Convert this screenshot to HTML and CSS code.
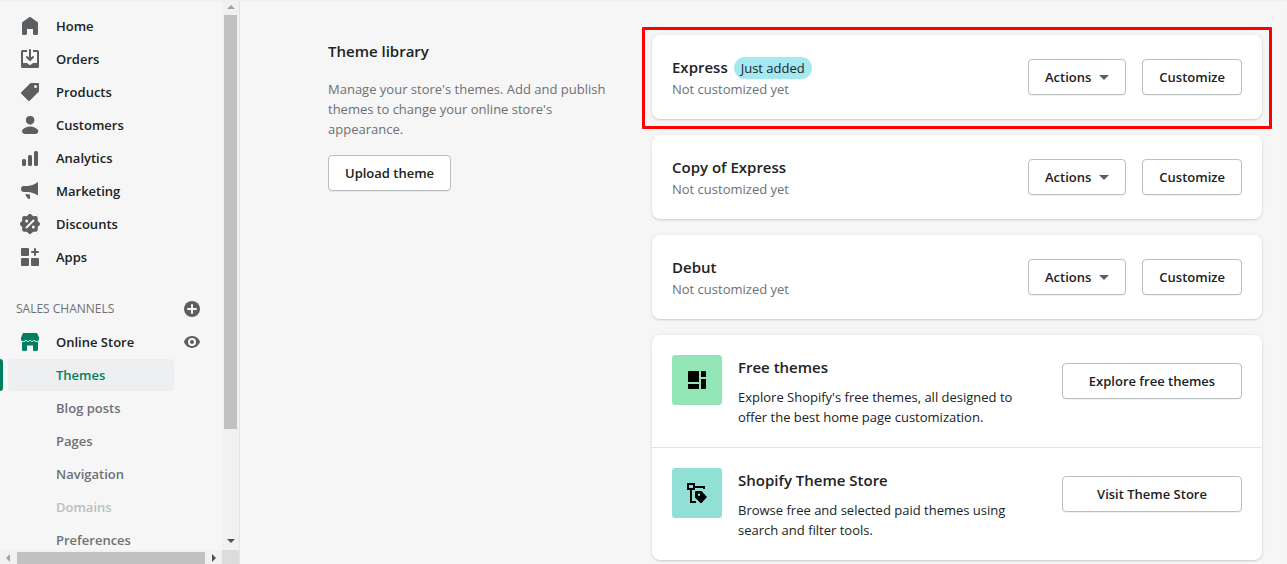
FILE: index.html
```html
<!DOCTYPE html>
<html lang="en">
<head>
    <meta charset="UTF-8">
    <meta name="viewport" content="width=device-width, initial-scale=1.0">
    <title>Themes</title>
    <link rel="stylesheet" href="styles.css">
</head>
<body>
    <div class="app">
        <aside class="sidebar">
            <nav class="nav">
                <ul class="nav-list">
                    <li><a href="#" class="nav-item">
                        <svg class="icon" viewBox="0 0 20 20"><path d="M18 7.261V17.5c0 .841-.672 1.5-1.5 1.5h-2c-.828 0-1.5-.659-1.5-1.5V13H7v4.477C7 18.318 6.328 19 5.5 19h-2c-.828 0-1.5-.682-1.5-1.523V7.261a1.5 1.5 0 0 1 .615-1.21l6.59-4.82a1.481 1.481 0 0 1 1.59 0l6.59 4.82A1.5 1.5 0 0 1 18 7.26z"/></svg>
                        Home</a></li>
                    <li><a href="#" class="nav-item">
                        <svg class="icon" viewBox="0 0 20 20"><path d="M11 1a1 1 0 1 0-2 0v7.586L7.707 7.293a1 1 0 0 0-1.414 1.414l3 3a1 1 0 0 0 1.414 0l3-3a1 1 0 0 0-1.414-1.414L11 8.586V1z"/><path d="M3 14V3h4V1H2.5A1.5 1.5 0 0 0 1 2.5v15A1.5 1.5 0 0 0 2.5 19h15a1.5 1.5 0 0 0 1.5-1.5v-15A1.5 1.5 0 0 0 17.5 1H13v2h4v11h-3.5c-.775 0-1.388.662-1.926 1.244l-.11.12A1.994 1.994 0 0 1 10 16a1.994 1.994 0 0 1-1.463-.637l-.111-.12C7.888 14.664 7.275 14 6.5 14H3z"/></svg>
                        Orders</a></li>
                    <li><a href="#" class="nav-item">
                        <svg class="icon" viewBox="0 0 20 20"><path fill-rule="evenodd" d="M10.293 1.293A1 1 0 0 1 11 1h7a1 1 0 0 1 1 1v7a1 1 0 0 1-.293.707l-9 9a1 1 0 0 1-1.414 0l-7-7a1 1 0 0 1 0-1.414l9-9zM15.5 6a1.5 1.5 0 1 0 0-3 1.5 1.5 0 0 0 0 3z"/></svg>
                        Products</a></li>
                    <li><a href="#" class="nav-item">
                        <svg class="icon" viewBox="0 0 20 20"><path d="M14.363 5.22a4.22 4.22 0 1 1-8.439 0 4.22 4.22 0 0 1 8.439 0zM2.67 14.469c1.385-1.09 4.141-2.853 7.474-2.853 3.332 0 6.089 1.764 7.474 2.853.618.486.81 1.308.567 2.056l-.333 1.02A2.11 2.11 0 0 1 15.846 19H4.441a2.11 2.11 0 0 1-2.005-1.455l-.333-1.02c-.245-.748-.052-1.57.567-2.056z"/></svg>
                        Customers</a></li>
                    <li><a href="#" class="nav-item">
                        <svg class="icon" viewBox="0 0 20 20"><rect x="2" y="11" width="4" height="7" rx="1.5"/><rect x="8" y="7" width="4" height="11" rx="1.5"/><rect x="14" y="3" width="4" height="15" rx="1.5"/></svg>
                        Analytics</a></li>
                    <li><a href="#" class="nav-item">
                        <svg class="icon" viewBox="0 0 20 20"><path d="M18 1v13.500c-3.500-2.300-6.500-3.300-10.500-3.500H4a3 3 0 0 1 0-6h3.500C11.500 4.700 15 3.400 18 1zM5.500 13c1.500 0 3 .2 4.500.5V17a1 1 0 0 1-1.700.8C6.800 16.500 5.800 15 5.500 13z"/></svg>
                        Marketing</a></li>
                    <li><a href="#" class="nav-item">
                        <svg class="icon" viewBox="0 0 20 20"><path d="M11.600.7l1.500 1.500 2.300-.1a2.300 2.300 0 0 1 2.400 2.400l-.1 2.300 1.500 1.500a2.300 2.300 0 0 1 0 3.300l-1.500 1.500.1 2.300a2.300 2.300 0 0 1-2.400 2.400l-2.300-.1-1.500 1.500a2.300 2.300 0 0 1-3.300 0l-1.500-1.500-2.300.1a2.300 2.300 0 0 1-2.400-2.400l.1-2.300-1.500-1.500a2.300 2.300 0 0 1 0-3.300l1.500-1.500-.1-2.300a2.300 2.300 0 0 1 2.400-2.400l2.300.1L8.300.7a2.300 2.300 0 0 1 3.300 0z"/><path class="cutout-line" d="M6.500 13.500l7-7"/><circle class="cutout" cx="6.700" cy="6.900" r="1.500"/><circle class="cutout" cx="13.300" cy="13.100" r="1.500"/></svg>
                        Discounts</a></li>
                    <li><a href="#" class="nav-item">
                        <svg class="icon" viewBox="0 0 20 20"><rect x="1" y="1" width="8" height="8" rx="1"/><rect x="1" y="11" width="8" height="8" rx="1"/><rect x="11" y="11" width="8" height="8" rx="1"/><path d="M14 2a1 1 0 0 1 2 0v2h2a1 1 0 0 1 0 2h-2v2a1 1 0 0 1-2 0V6h-2a1 1 0 0 1 0-2h2z"/></svg>
                        Apps</a></li>
                </ul>

                <div class="nav-heading">
                    <span>SALES CHANNELS</span>
                    <button class="icon-button" aria-label="Add sales channel">
                        <svg class="icon-small" viewBox="0 0 16 16"><circle cx="8" cy="8" r="8"/><path class="cutout-line" d="M8 4v8M4 8h8"/></svg>
                    </button>
                </div>

                <ul class="nav-list">
                    <li class="nav-row">
                        <a href="#" class="nav-item">
                            <svg class="icon icon-green" viewBox="0 0 20 20"><path d="M3 1h14l2 4.500v2A2.500 2.500 0 0 1 18 9.300V17.500A1.500 1.500 0 0 1 16.500 19H14a1 1 0 0 1-1-1v-4.500H7V18a1 1 0 0 1-1 1H3.500A1.500 1.500 0 0 1 2 17.500V9.300A2.500 2.500 0 0 1 1 7.500v-2z"/><path class="awning-line" d="M1 9c2 1.200 4 .8 5-1 1.200 2 2.800 2 4 0 1.200 2 2.800 2 4 0 1 1.800 3 2.200 5 1"/></svg>
                            Online Store</a>
                        <button class="icon-button" aria-label="View your online store">
                            <svg class="icon-small" viewBox="0 0 16 16"><path d="M8 2C3.500 2 .6 5.700.1 7.400c-.1.200-.1.500 0 .8C.6 9.800 3.500 14 8 14s7.400-4.200 7.900-5.800c.1-.3.100-.6 0-.8C15.400 5.700 12.500 2 8 2z"/><circle class="cutout" cx="8" cy="8" r="4"/><circle cx="8" cy="8" r="2"/></svg>
                        </button>
                    </li>
                    <li class="nav-active"><a href="#" class="nav-item nav-sub" aria-current="page">Themes</a></li>
                    <li><a href="#" class="nav-item nav-sub">Blog posts</a></li>
                    <li><a href="#" class="nav-item nav-sub">Pages</a></li>
                    <li><a href="#" class="nav-item nav-sub">Navigation</a></li>
                    <li><a href="#" class="nav-item nav-sub nav-disabled">Domains</a></li>
                    <li><a href="#" class="nav-item nav-sub">Preferences</a></li>
                </ul>
            </nav>

            <div class="scroll-y">
                <svg class="arrow arrow-off" viewBox="0 0 8 4"><path d="M0 4l4-4 4 4z"/></svg>
                <div class="track-y"><div class="thumb-y"></div></div>
                <svg class="arrow" viewBox="0 0 8 4"><path d="M0 0h8L4 4z"/></svg>
            </div>
            <div class="scroll-x">
                <svg class="arrow-side arrow-off" viewBox="0 0 4 8"><path d="M4 0v8L0 4z"/></svg>
                <div class="thumb-x"></div>
                <svg class="arrow-side" viewBox="0 0 4 8"><path d="M0 0l4 4-4 4z"/></svg>
            </div>
            <div class="scroll-corner"></div>
        </aside>

        <main class="main">
            <section class="intro">
                <h2>Theme library</h2>
                <p>Manage your store's themes. Add and publish themes to change your online store's appearance.</p>
                <button class="button">Upload theme</button>
            </section>

            <div class="cards">
                <article class="card theme highlighted">
                    <div class="theme-info">
                        <h3>Express <span class="badge">Just added</span></h3>
                        <p>Not customized yet</p>
                    </div>
                    <button class="button">Actions <svg class="caret" viewBox="0 0 10 5"><path d="M0 0h10L5 5z"/></svg></button>
                    <button class="button">Customize</button>
                </article>

                <article class="card theme">
                    <div class="theme-info">
                        <h3>Copy of Express</h3>
                        <p>Not customized yet</p>
                    </div>
                    <button class="button">Actions <svg class="caret" viewBox="0 0 10 5"><path d="M0 0h10L5 5z"/></svg></button>
                    <button class="button">Customize</button>
                </article>

                <article class="card theme">
                    <div class="theme-info">
                        <h3>Debut</h3>
                        <p>Not customized yet</p>
                    </div>
                    <button class="button">Actions <svg class="caret" viewBox="0 0 10 5"><path d="M0 0h10L5 5z"/></svg></button>
                    <button class="button">Customize</button>
                </article>

                <article class="card">
                    <div class="resource">
                        <div class="tile tile-green">
                            <svg class="icon" viewBox="0 0 20 20"><path d="M2 1h10v11H1V2a1 1 0 0 1 1-1zM14 1h4a1 1 0 0 1 1 1v5h-5zM14 9h5v9a1 1 0 0 1-1 1h-4zM1 14h11v5H2a1 1 0 0 1-1-1z"/></svg>
                        </div>
                        <div class="resource-info">
                            <h3>Free themes</h3>
                            <p>Explore Shopify's free themes, all designed to offer the best home page customization.</p>
                        </div>
                        <button class="button button-wide">Explore free themes</button>
                    </div>
                    <div class="resource">
                        <div class="tile tile-teal">
                            <svg class="icon" viewBox="0 0 20 20"><path class="stroke" d="M1 1h6v5H1zM7 4h10v2M4 6v13h5"/><path fill-rule="evenodd" d="M9 8h5.500l5.500 6-5.500 6h-1L8 14.500V9a1 1 0 0 1 1-1zM12 13a1.200 1.200 0 1 0 0-2.400 1.200 1.200 0 0 0 0 2.400z"/></svg>
                        </div>
                        <div class="resource-info">
                            <h3>Shopify Theme Store</h3>
                            <p>Browse free and selected paid themes using search and filter tools.</p>
                        </div>
                        <button class="button button-wide">Visit Theme Store</button>
                    </div>
                </article>
            </div>
        </main>
    </div>
</body>
</html>
```
FILE: styles.css
```css
* {
    box-sizing: border-box;
}

body {
    margin: 0;
    background-color: #f6f6f6;
    color: #202223;
    font-family: "Open Sans", "Noto Sans", sans-serif;
    font-size: 13px;
    line-height: 20px;
}

h2, h3, p, ul {
    margin: 0;
    padding: 0;
}

h2, h3 {
    font-size: 15px;
    font-weight: 600;
    line-height: 24px;
}

.app {
    display: flex;
    box-shadow: inset 0 2px 2px -1px #ececec;
}

/* sidebar */
.sidebar {
    display: grid;
    grid-template-columns: 1fr 17px;
    grid-template-rows: 1fr 14px;
    flex: none;
    width: 240px;
    height: 100vh;
    border-right: 1px solid #e1e3e5;
}

.nav {
    padding-top: 10px;
    overflow: hidden;
}

.nav-list {
    list-style: none;
}

.nav-list li {
    margin-bottom: 1px;
}

.nav-item {
    display: flex;
    align-items: center;
    gap: 16px;
    height: 32px;
    padding-left: 20px;
    color: #202223;
    font-weight: 600;
    text-decoration: none;
}

.nav-row,
.nav-heading {
    display: flex;
    align-items: center;
    justify-content: space-between;
    padding-right: 22px;
}

.nav-heading {
    height: 20px;
    margin: 26px 0 7px;
    padding-left: 16px;
    color: #6d7175;
    font-size: 12px;
    font-weight: 500;
}

.nav-sub {
    padding-left: 56px;
    color: #6d7175;
}

.nav-disabled {
    color: #babec3;
}

.nav-active {
    display: flex;
    gap: 5px;
}

.nav-active::before {
    content: "";
    width: 3px;
    border-radius: 0 3px 3px 0;
    background-color: #008060;
}

.nav-active .nav-item {
    width: 166px;
    padding-left: 48px;
    border-radius: 4px;
    background-color: #edeeef;
    color: #008060;
}

.icon {
    flex: none;
    width: 20px;
    height: 20px;
    fill: #5c5f62;
}

.icon-green {
    fill: #008060;
}

.icon-small {
    display: block;
    width: 16px;
    height: 16px;
    fill: #5c5f62;
}

.icon-button {
    padding: 0;
    border: 0;
    background: none;
    cursor: pointer;
}

.cutout {
    fill: #f6f6f6;
}

.cutout-line,
.awning-line {
    fill: none;
    stroke: #f6f6f6;
    stroke-width: 2;
    stroke-linecap: round;
}

.awning-line {
    stroke-width: 1;
}

/* scrollbars */
.scroll-y,
.scroll-x {
    display: flex;
    align-items: center;
    background-color: #f1f1f1;
}

.scroll-y {
    flex-direction: column;
    padding: 5px 0 7px;
}

.track-y {
    flex: 1;
    width: 13px;
    margin: 6px 0;
}

.thumb-y {
    height: 80%;
    background-color: #c1c1c1;
}

.scroll-x {
    gap: 7px;
    padding: 2px 6px 0;
}

.thumb-x {
    flex: 1;
    height: 12px;
    background-color: #c1c1c1;
}

.scroll-corner {
    background-color: #dcdcdc;
}

.arrow {
    width: 8px;
    height: 4px;
    fill: #505050;
}

.arrow-side {
    width: 4px;
    height: 8px;
    fill: #505050;
}

.arrow-off {
    fill: #a3a3a3;
}

/* content */
.main {
    display: grid;
    grid-template-columns: 1fr 2fr;
    gap: 19px;
    flex: 1;
    padding: 35px 25px 4px 88px;
}

.intro {
    padding: 4px 20px 0 0;
}

.intro p {
    margin: 16px 0;
    color: #6d7175;
}

.cards {
    display: flex;
    flex-direction: column;
    gap: 16px;
}

.card {
    border-radius: 8px;
    background-color: #fff;
    box-shadow: 0 0 5px rgba(23, 24, 24, 0.05), 0 1px 2px rgba(0, 0, 0, 0.15);
}

.theme {
    display: flex;
    align-items: center;
    gap: 16px;
    padding: 20px;
}

.theme-info {
    flex: 1;
}

.theme-info p {
    color: #6d7175;
}

.theme-info h3 {
    display: flex;
    align-items: flex-end;
    gap: 6px;
}

.highlighted {
    position: relative;
}

.highlighted::after {
    content: "";
    position: absolute;
    inset: -8px -10px -10px;
    border: 3px solid #f00;
    border-radius: 1px;
    pointer-events: none;
}

.badge {
    padding: 1px 7px;
    border-radius: 11px;
    background-color: #a4e8f2;
    font-size: 13px;
    font-weight: 400;
    line-height: 20px;
}

.button {
    display: inline-flex;
    align-items: center;
    justify-content: center;
    gap: 8px;
    height: 36px;
    padding: 0 16px;
    border: 1px solid #babfc3;
    border-radius: 4px;
    background-color: #fff;
    box-shadow: 0 1px 0 rgba(0, 0, 0, 0.05);
    color: #202223;
    font: inherit;
    font-weight: 600;
    white-space: nowrap;
    cursor: pointer;
}

.caret {
    width: 10px;
    height: 5px;
    fill: #5c5f62;
}

.resource {
    display: flex;
    gap: 16px;
    padding: 20px;
}

.resource + .resource {
    border-top: 1px solid #e1e3e5;
}

.resource-info {
    flex: 1;
    padding-right: 16px;
}

.resource-info p {
    margin-top: 8px;
}

.button-wide {
    width: 180px;
    margin-top: 8px;
}

.tile {
    display: flex;
    align-items: center;
    justify-content: center;
    width: 50px;
    height: 50px;
    border-radius: 3px;
}

.tile .icon {
    fill: #000;
}

.tile-green {
    background-color: #92e6b5;
}

.tile-teal {
    background-color: #91e0d6;
}

.icon .stroke {
    fill: none;
    stroke: #000;
    stroke-width: 2;
}
```
